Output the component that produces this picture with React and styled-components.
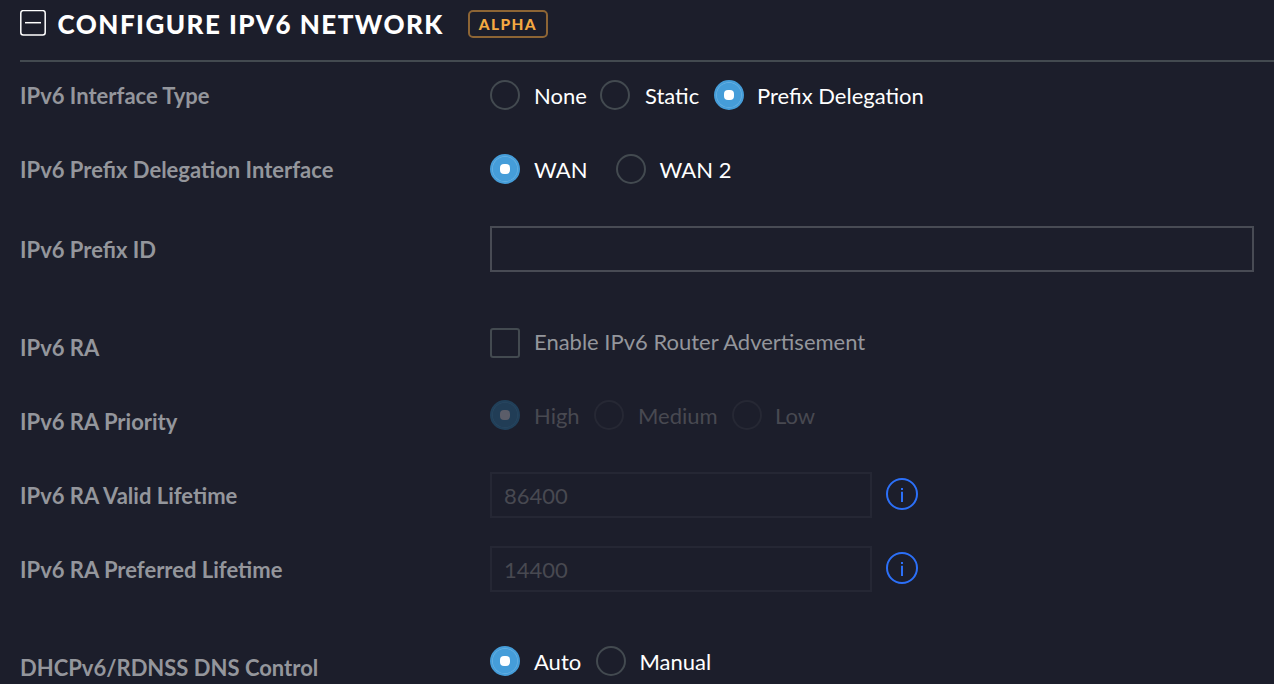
import React from 'react';
import styled, { createGlobalStyle, css } from 'styled-components';

const Global = createGlobalStyle`
  * { box-sizing: border-box; }
  body { margin: 0; background: #1c1e2b; overflow: hidden; font-family: Lato, "Liberation Sans", sans-serif; font-size: 22px; color: #fff; }
`;
const Page = styled.main`
  height: 684px;
  padding-left: 20px;
  overflow: hidden;
  background: #1c1e2b;
`;
const Header = styled.header`
  display: flex;
  height: 62px;
  padding-top: 10px;
  align-items: flex-start;
  border-bottom: 2px solid #434a50;
`;
const Collapse = styled.svg`
  width: 26px;
  height: 26px;
  margin-right: 11.6px;
  flex: none;
`;
const Title = styled.h2`
  margin: -1px 24px 0 0;
  font-size: 26px;
  line-height: 30px;
  font-weight: 900;
  letter-spacing: 1.47px;
  white-space: nowrap;
`;
const Badge = styled.span`
  height: 28px;
  width: 80px;
  border: 2px solid #8d6535;
  border-radius: 5px;
  color: #f5a942;
  font-size: 15.4px;
  font-weight: 900;
  letter-spacing: 1.4px;
  line-height: 25px;
  text-align: center;
`;
const Row = styled.div`
  display: grid;
  grid-template-columns: 470px 1fr;
  height: ${p => p.$h}px;
`;
const Label = styled.div`
  padding-top: ${p => p.$top}px;
  color: #94969c;
  font-weight: 700;
  line-height: 28px;
  white-space: nowrap;
`;
const Field = styled.div`
  display: flex;
  align-items: flex-start;
  padding-top: ${p => p.$top}px;
`;
const Option = styled.label`
  display: flex;
  width: ${p => p.$w}px;
  gap: ${p => p.$gap ?? 14}px;
  line-height: ${p => p.$line ?? 32}px;
  white-space: nowrap;
`;
const Dot = styled.span`
  display: flex;
  flex: none;
  width: 30px;
  height: 30px;
  align-items: center;
  justify-content: center;
  border: 2px solid ${p => (p.$off ? '#262834' : '#434a50')};
  border-radius: 50%;
  ${p => p.$on && css`
    border-color: ${p.$off ? '#21405a' : '#459dd9'};
    background: ${p.$off ? '#213d56' : '#459dd9'};
    box-shadow: inset 0 0 0 0.7px ${p.$off ? '#2b4962' : '#6fb4e2'};
    &::after { content: ""; width: 10px; height: 10px; border-radius: 4px; background: ${p.$off ? '#5b5d69' : '#fff'}; }
  `}
`;
const Check = styled.span`
  flex: none;
  width: 30px;
  height: 30px;
  border: 2px solid #434a50;
  border-radius: 3px;
`;
const Text = styled.span`
  color: ${p => p.$c || '#fff'};
`;
const Input = styled.input`
  width: ${p => p.$w}px;
  height: 46px;
  padding: 0 12px;
  border: 2px solid ${p => (p.disabled ? '#252734' : '#484b54')};
  border-radius: 0;
  outline: 0;
  background: transparent;
  color: #484951;
  font: inherit;
`;
const Info = styled.svg`
  width: 32px;
  height: 32px;
  margin: 6px 0 0 14px;
`;

const Radio = ({ on, off, w, gap, children }) => (
  <Option $w={w} $gap={gap}><Dot $on={on} $off={off} /><Text $c={off ? '#484951' : undefined}>{children}</Text></Option>
);
const InfoIcon = () => (
  <Info viewBox="0 0 32 32" fill="none" stroke="#2c70f8" strokeWidth="2">
    <circle cx="16" cy="16" r="15" />
    <path d="M16 13.8v10.2M16 10v2" />
  </Info>
);

export default function App() {
  return (
    <Page>
      <Global />
      <Header>
        <Collapse viewBox="0 0 26 26" fill="none" stroke="#fff" strokeWidth="1.5">
          <rect x="0.8" y="0.6" width="24.4" height="24.4" rx="2.5" />
          <path d="M5 12.7h16" />
        </Collapse>
        <Title>CONFIGURE IPV6 NETWORK</Title>
        <Badge>ALPHA</Badge>
      </Header>
      <Row $h={74}>
        <Label $top={20}>IPv6 Interface Type</Label>
        <Field $top={18}><Radio w={110}>None</Radio><Radio w={114} gap={15}>Static</Radio><Radio on w={220} gap={13}>Prefix Delegation</Radio></Field>
      </Row>
      <Row $h={74}>
        <Label $top={20}>IPv6 Prefix Delegation Interface</Label>
        <Field $top={18}><Radio on w={126}>WAN</Radio><Radio w={120} gap={13.5}>WAN 2</Radio></Field>
      </Row>
      <Row $h={98}>
        <Label $top={26}>IPv6 Prefix ID</Label>
        <Field $top={16}><Input $w={764} /></Field>
      </Row>
      <Row $h={80}>
        <Label $top={26}>IPv6 RA</Label>
        <Field $top={20}><Option $line={28}><Check /><Text $c="#94969c">Enable IPv6 Router Advertisement</Text></Option></Field>
      </Row>
      <Row $h={74}>
        <Label $top={20}>IPv6 RA Priority</Label>
        <Field $top={12}><Radio on off w={104}>High</Radio><Radio off w={138}>Medium</Radio><Radio off w={90} gap={13}>Low</Radio></Field>
      </Row>
      <Row $h={74}>
        <Label $top={20}>IPv6 RA Valid Lifetime</Label>
        <Field $top={10}><Input $w={382} disabled defaultValue="86400" /><InfoIcon /></Field>
      </Row>
      <Row $h={74}>
        <Label $top={20}>IPv6 RA Preferred Lifetime</Label>
        <Field $top={10}><Input $w={382} disabled defaultValue="14400" /><InfoIcon /></Field>
      </Row>
      <Row $h={74}>
        <Label $top={44}>DHCPv6/RDNSS DNS Control</Label>
        <Field $top={36}><Radio on w={106}>Auto</Radio><Radio w={120} gap={13.5}>Manual</Radio></Field>
      </Row>
    </Page>
  );
}
